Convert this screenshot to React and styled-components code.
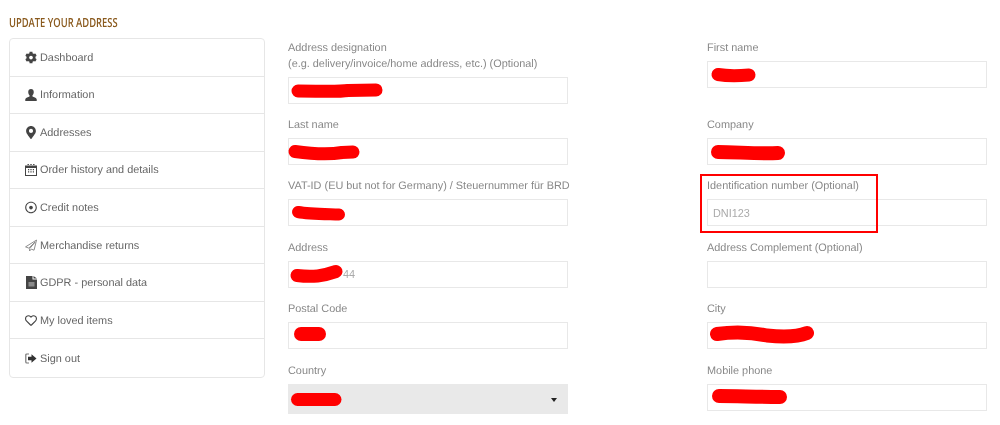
import React from 'react';
import styled, { createGlobalStyle } from 'styled-components';
import { FaCog, FaMapMarkerAlt, FaRegDotCircle, FaRegHeart } from 'react-icons/fa';

const GlobalStyle = createGlobalStyle`
  html, body {
    margin: 0;
    padding: 0;
    background: #fff;
  }
  body {
    font-family: "Liberation Sans", Arial, sans-serif;
    font-size: 10.9px;
    color: #777;
    text-rendering: geometricPrecision;
  }
`;

const Page = styled.div`
  width: 1000px;
  height: 425px;
  box-sizing: border-box;
  padding: 16px 13px 0 9px;
  overflow: hidden;
  filter: blur(0.3px);
`;

const Title = styled.h1`
  margin: 0;
  height: 22px;
  font-family: "Open Sans", sans-serif;
  font-size: 12.5px;
  line-height: 14px;
  font-weight: 600;
  color: #8a5a1e;
  text-transform: uppercase;
  transform: scaleX(0.75);
  transform-origin: left center;
  white-space: nowrap;
`;

const Columns = styled.div`
  display: flex;
  align-items: flex-start;
  gap: 23px;
`;

const Sidebar = styled.ul`
  list-style: none;
  margin: 0;
  padding: 0;
  width: 256px;
  height: 340px;
  box-sizing: border-box;
  display: grid;
  grid-template-rows: repeat(9, 1fr);
  border: 1px solid #e6e6e6;
  border-radius: 4px;
`;

const SidebarItem = styled.li`
  display: flex;
  align-items: center;
  gap: 3px;
  padding: 1px 0 0 15px;
  color: #666;
  font-size: 10.9px;
  border-bottom: 1px solid #e6e6e6;

  &:last-child {
    border-bottom: 0;
  }
`;

const IconSlot = styled.span`
  width: 12px;
  height: 13px;
  display: flex;
  align-items: center;
  justify-content: center;
  margin-top: -1px;
  color: #444;
  font-size: 13px;
`;

const Form = styled.form`
  margin-top: 1px;
  display: grid;
  grid-template-columns: 280px 280px;
  column-gap: 139px;
  grid-template-rows: 65px repeat(5, 49.4px);
  row-gap: 12px;
`;

const Field = styled.div`
  position: relative;
  display: flex;
  flex-direction: column;
  gap: 5px;
`;

const Label = styled.label`
  padding-top: 1px;
  font-size: 10.9px;
  line-height: 16px;
  color: #888;
  white-space: nowrap;
`;

const InputBox = styled.div`
  position: relative;
  flex: none;
  height: 27px;
`;

const TextInput = styled.input`
  display: block;
  width: 100%;
  height: 100%;
  box-sizing: border-box;
  margin: 0;
  padding: 0 0 0 ${(p) => p.$indent || 5}px;
  border: 1px solid #e8e8e8;
  border-radius: 0;
  outline: 0;
  background: #fff;
  font-family: inherit;
  font-size: 10.9px;
  color: #aaa;

  &::placeholder {
    color: #aaa;
    opacity: 1;
  }
`;

const SelectBox = styled.div`
  position: relative;
  flex: none;
  height: 30px;

  &::after {
    content: '';
    position: absolute;
    right: 11px;
    top: 14px;
    border-left: 3.5px solid transparent;
    border-right: 3.5px solid transparent;
    border-top: 4px solid #222;
  }
`;

const Select = styled.select`
  display: block;
  width: 100%;
  height: 100%;
  margin: 0;
  border: 0;
  border-radius: 0;
  appearance: none;
  background: #e9e9e9;
`;

const ScribbleSvg = styled.svg`
  position: absolute;
  inset: 0;
  width: 100%;
  height: 100%;
  overflow: visible;
  pointer-events: none;
`;

const Highlight = styled.div`
  position: absolute;
  left: -7px;
  top: -3px;
  width: 178px;
  height: 59px;
  box-sizing: border-box;
  border: 2px solid #f00;
  pointer-events: none;
`;

const Scribble = ({ d, width = 13 }) => (
  <ScribbleSvg>
    <path d={d} fill="none" stroke="#f00" strokeWidth={width} strokeLinecap="round" strokeLinejoin="round" />
  </ScribbleSvg>
);

const UserIcon = () => (
  <svg width="13" height="12" viewBox="0 0 13 13">
    <path fill="currentColor" d="M6.500 0C4.600 0 3.500 1.300 3.500 3.200c0 1.500.6 3 1.400 3.700v1.200C3.500 8.900.6 9.400.3 11v2h12.400v-2c-.3-1.600-3.200-2.100-4.600-2.900V6.900c.8-.7 1.400-2.200 1.400-3.700C9.500 1.300 8.400 0 6.500 0z" />
  </svg>
);

const CalendarIcon = () => (
  <svg width="12" height="12" viewBox="0 0 12 12">
    <path fill="currentColor" d="M2.500 0h1.400v2H2.500zM5.300 0h1.400v2H5.300zM8.100 0h1.400v2H8.100zM0 1.500h12V12H0zM1 4v7h10V4z" fillRule="evenodd" />
    <path fill="currentColor" d="M3 5h1.200v1.200H3zM5.400 5h1.200v1.200H5.400zM7.800 5H9v1.200H7.800zM3 7.300h1.200v1.200H3zM5.400 7.300h1.200v1.200H5.400zM7.800 7.300H9v1.200H7.800z" />
  </svg>
);

const PlaneIcon = () => (
  <svg width="13" height="13" viewBox="0 0 13 13">
    <path fill="none" stroke="#777" strokeWidth="0.9" strokeLinejoin="round" d="M12.500.6L.6 8l3.500 1.300L11 2.800 5 10v2.400l1.800-2 3 1.200z" />
  </svg>
);

const FileIcon = () => (
  <svg width="11" height="13" viewBox="0 0 11 13">
    <path fill="#444" d="M0 0h6.500v3.500H11V13H0z" />
    <path fill="#444" d="M7.500 0L11 2.600H7.500z" />
    <path fill="#8a8a8a" d="M2.500 6h6v4.500h-6z" />
  </svg>
);

const SignOutIcon = () => (
  <svg width="12" height="11" viewBox="0 0 12 11">
    <path fill="none" stroke="#777" strokeWidth="1.200" d="M4 1H1.800Q.8 1 .8 2v7q0 1 1 1H4" />
    <path fill="#333" d="M3 3.700h3.500V1.200L11.500 5.500 6.500 9.800V7.300H3z" />
  </svg>
);

const menu = [
  { label: 'Dashboard', icon: <FaCog /> },
  { label: 'Information', icon: <UserIcon /> },
  { label: 'Addresses', icon: <FaMapMarkerAlt /> },
  { label: 'Order history and details', icon: <CalendarIcon /> },
  { label: 'Credit notes', icon: <FaRegDotCircle /> },
  { label: 'Merchandise returns', icon: <PlaneIcon /> },
  { label: 'GDPR - personal data', icon: <FileIcon /> },
  { label: 'My loved items', icon: <FaRegHeart /> },
  { label: 'Sign out', icon: <SignOutIcon /> },
];

const App = () => (
  <Page>
    <GlobalStyle />
    <Title>Update your address</Title>
    <Columns>
      <Sidebar>
        {menu.map(({ label, icon }) => (
          <SidebarItem key={label}>
            <IconSlot>{icon}</IconSlot>
            {label}
          </SidebarItem>
        ))}
      </Sidebar>
      <Form>
        <Field>
          <Label>Address designation<br />(e.g. delivery/invoice/home address, etc.) (Optional)</Label>
          <InputBox>
            <TextInput />
            <Scribble d="M10 14 C30 14 50 15 60 13.500 L88 13" />
          </InputBox>
        </Field>
        <Field>
          <Label>First name</Label>
          <InputBox>
            <TextInput />
            <Scribble width={13} d="M11 13.500 C20 15 30 15 42 14" />
          </InputBox>
        </Field>
        <Field>
          <Label>Last name</Label>
          <InputBox>
            <TextInput />
            <Scribble width={13} d="M7 13.500 C25 16 40 17 54 14.500 L65 14" />
          </InputBox>
        </Field>
        <Field>
          <Label>Company</Label>
          <InputBox>
            <TextInput />
            <Scribble width={14} d="M11 14 C30 14 50 16 71 15" />
          </InputBox>
        </Field>
        <Field>
          <Label>VAT-ID (EU but not for Germany) / Steuernummer für BRD</Label>
          <InputBox>
            <TextInput />
            <Scribble width={12} d="M10 13 C20 15 35 15 51 15.500" />
          </InputBox>
        </Field>
        <Field>
          <Label>Identification number (Optional)</Label>
          <InputBox>
            <TextInput placeholder="DNI123" />
          </InputBox>
          <Highlight />
        </Field>
        <Field>
          <Label>Address</Label>
          <InputBox>
            <TextInput $indent={54} defaultValue="44" />
            <Scribble width={13} d="M9 14.500 C25 16.500 35 15 48 10.500" />
          </InputBox>
        </Field>
        <Field>
          <Label>Address Complement (Optional)</Label>
          <InputBox>
            <TextInput />
          </InputBox>
        </Field>
        <Field>
          <Label>Postal Code</Label>
          <InputBox>
            <TextInput />
            <Scribble width={14} d="M13 12 L31 12" />
          </InputBox>
        </Field>
        <Field>
          <Label>City</Label>
          <InputBox>
            <TextInput />
            <Scribble width={14} d="M10 12 C30 9 48 11 60 13.500 C75 15 90 15 100 11" />
          </InputBox>
        </Field>
        <Field>
          <Label>Country</Label>
          <SelectBox>
            <Select />
            <Scribble d="M9.500 15.500 L47 15.500" />
          </SelectBox>
        </Field>
        <Field>
          <Label>Mobile phone</Label>
          <InputBox>
            <TextInput />
            <Scribble width={14} d="M12 12 C30 12 50 13 73 13" />
          </InputBox>
        </Field>
      </Form>
    </Columns>
  </Page>
);

export default App;
